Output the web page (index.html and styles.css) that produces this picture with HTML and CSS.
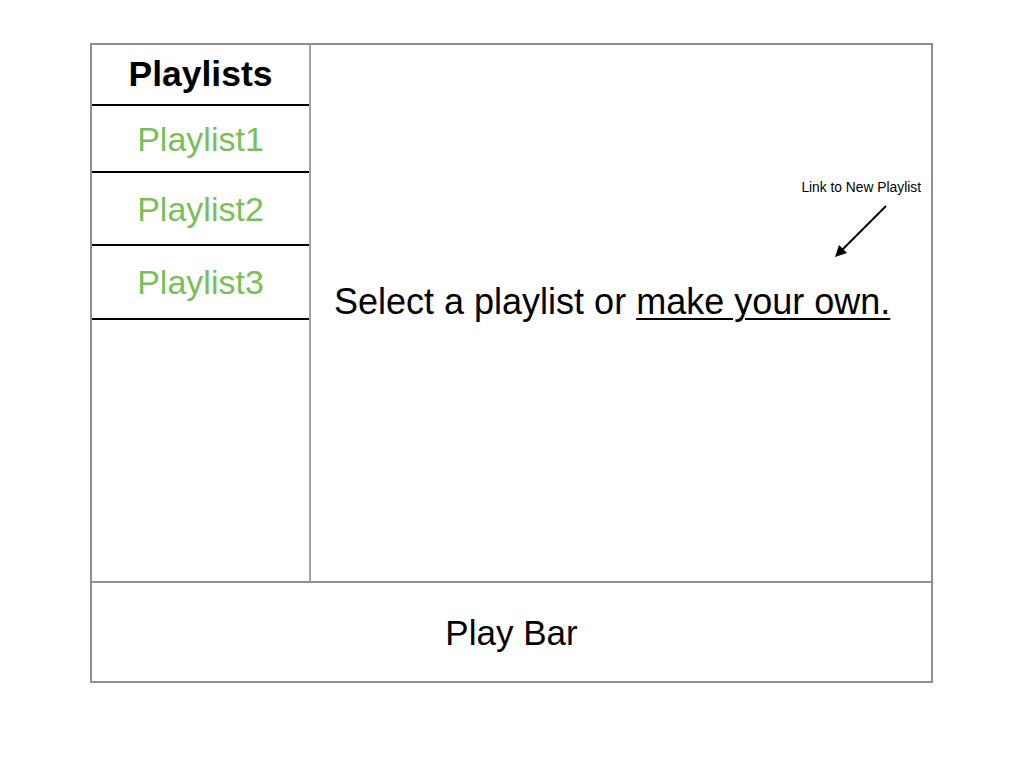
FILE: index.html
```html
<!DOCTYPE html>
<html lang="en">
<head>
<meta charset="utf-8">
<title>Playlists</title>
<link rel="stylesheet" href="styles.css">
</head>
<body>
<div class="page">
  <div class="frame">
    <div class="main">
      <aside class="sidebar">
        <div class="side-head">Playlists</div>
        <div class="side-item item-1">Playlist1</div>
        <div class="side-item item-2">Playlist2</div>
        <div class="side-item item-3">Playlist3</div>
      </aside>
      <section class="content">
        <p class="prompt">Select a playlist or <a class="new-link" href="#">make your own.</a></p>
      </section>
    </div>
    <footer class="playbar">Play Bar</footer>
    <div class="note">
      <span class="note-text">Link to New Playlist</span>
      <svg class="note-arrow" width="60" height="60" viewBox="0 0 60 60">
        <line x1="56" y1="4" x2="10" y2="50" stroke="#000" stroke-width="2"/>
        <polygon points="5,55 9,43 17,51" fill="#000"/>
      </svg>
    </div>
  </div>
</div>
</body>
</html>
```
FILE: styles.css
```css
html, body {
  margin: 0;
  padding: 0;
  background: #fff;
}

body {
  font-family: "Liberation Sans", Arial, sans-serif;
  color: #000;
}

.page {
  padding: 43px 0 0 90px;
}

.frame {
  position: relative;
  box-sizing: border-box;
  width: 843px;
  height: 640px;
  border: 2px solid #8e8e93;
  display: flex;
  flex-direction: column;
}

.main {
  display: flex;
  height: 536px;
}

.sidebar {
  box-sizing: border-box;
  width: 219px;
  border-right: 2px solid #a3a3a8;
  display: flex;
  flex-direction: column;
}

.side-head,
.side-item {
  display: flex;
  align-items: center;
  justify-content: center;
  flex: none;
  border-bottom: 2px solid #000;
}

.side-head {
  height: 59px;
  font-size: 35.5px;
  font-weight: bold;
}

.side-item {
  font-size: 34px;
  color: #79bf57;
}

.item-1 { height: 63px; padding-top: 2px; }
.item-2 { height: 69px; padding-top: 2px; }
.item-3 { height: 71px; padding-top: 1px; }

.content {
  flex: 1;
  padding: 239px 0 0 23px;
}

.prompt {
  margin: 0;
  font-size: 36px;
  line-height: 36px;
  white-space: nowrap;
}

.new-link {
  color: #000;
  text-decoration: underline;
  text-decoration-thickness: 2px;
  text-underline-offset: 4px;
}

.playbar {
  flex: 1;
  border-top: 2px solid #8e8e93;
  display: flex;
  align-items: center;
  justify-content: center;
  padding-top: 2px;
  font-size: 35px;
}

.note {
  position: absolute;
  top: 135px;
  left: 699px;
  width: 130px;
}

.note-text {
  display: block;
  text-align: right;
  font-size: 13.8px;
  line-height: 16px;
  white-space: nowrap;
}

.note-arrow {
  position: absolute;
  top: 22px;
  left: 39px;
}
```
